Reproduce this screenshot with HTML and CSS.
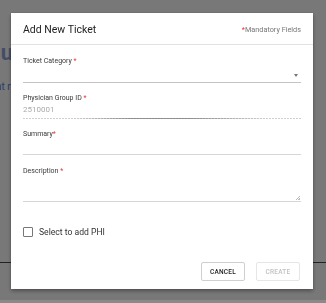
FILE: index.html
```html
<!DOCTYPE html>
<html>
<head>
<meta charset="utf-8">
<link rel="stylesheet" href="styles.css">
</head>
<body>
<div class="page">
  <div class="page-title">Lu</div>
  <div class="page-link">Chat now</div>
  <div class="page-rule"></div>
</div>
<div class="overlay">
  <div class="dialog">
    <div class="dialog-header">
      <div class="dialog-title">Add New Ticket</div>
      <div class="mandatory"><span class="req">*</span>Mandatory Fields</div>
    </div>
    <div class="dialog-body">
      <div class="field f1">
        <div class="label">Ticket Category <span class="req">*</span></div>
        <div class="input select"><span class="arrow"></span></div>
      </div>
      <div class="field f2">
        <div class="label">Physician Group ID <span class="req">*</span></div>
        <div class="input disabled"><span class="value">2510001</span></div>
      </div>
      <div class="field f3">
        <div class="label">Summary<span class="req">*</span></div>
        <div class="input"></div>
      </div>
      <div class="field f4">
        <div class="label">Description <span class="req">*</span></div>
        <div class="input textarea"><span class="grip"></span></div>
      </div>
      <div class="check-row">
        <span class="checkbox"></span>
        <span class="check-label">Select to add PHI</span>
      </div>
    </div>
    <div class="dialog-footer">
      <button class="btn cancel">Cancel</button>
      <button class="btn create">Create</button>
    </div>
  </div>
</div>
</body>
</html>
```
FILE: styles.css
```css
html, body {
  margin: 0;
  padding: 0;
}
body {
  width: 326px;
  height: 303px;
  overflow: hidden;
  background: #8a8a8a;
  font-family: Roboto, "Liberation Sans", sans-serif;
}
.page {
  height: 300px;
  padding-top: 40px;
  box-sizing: border-box;
  background: #fff;
}
.page-title {
  font-size: 22px;
  font-weight: 700;
  color: #8ea6d8;
  margin-left: -13px;
  line-height: 26px;
  letter-spacing: 2px;
}
.page-link {
  margin-top: 15px;
  margin-left: -16px;
  font-size: 10px;
  color: #5b82d6;
  line-height: 12px;
}
.page-rule {
  margin-top: 169px;
  height: 1px;
  background: #4a4a4a;
}
.overlay {
  position: fixed;
  left: 0;
  top: 0;
  width: 326px;
  height: 300px;
  background: rgba(0, 0, 0, 0.53);
  padding: 13px 0 0 11px;
  box-sizing: border-box;
}
.dialog {
  width: 302px;
  height: 276px;
  background: #fff;
  box-shadow: 0 2px 4px rgba(0, 0, 0, 0.35), 0 0 1px rgba(0, 0, 0, 0.2);
  display: flex;
  flex-direction: column;
}
.dialog-header {
  height: 31px;
  border-bottom: 1px solid #e2e2e2;
  display: flex;
  align-items: center;
  justify-content: space-between;
  padding: 0 12px 0 12px;
}
.dialog-title {
  font-size: 10.5px;
  color: #222;
  padding-top: 1px;
}
.mandatory {
  font-size: 7.3px;
  color: #777;
  padding-top: 1px;
}
.req {
  color: #e53935;
}
.dialog-body {
  padding: 11px 12px 0 12px;
}
.label {
  height: 10px;
  line-height: 10px;
  font-size: 7px;
  color: #3a3a3a;
}
.input {
  height: 15px;
  border-bottom: 1px solid #d6d6d6;
  position: relative;
}
.f1 .input {
  height: 16px;
  border-bottom-color: #c4c4c4;
}
.f2, .f3 {
  margin-top: 10px;
}
.f4 {
  margin-top: 11px;
}
.f4 .input {
  height: 25px;
}
.input.disabled {
  border-bottom: none;
  height: 16px;
  background-image: linear-gradient(to right, rgba(120,120,120,0.35) 60%, transparent 0);
  background-size: 3px 1px;
  background-repeat: repeat-x;
  background-position: left bottom;
}
.input.disabled::after {
  content: "";
  position: absolute;
  left: 18%;
  right: 12%;
  bottom: 0;
  height: 1px;
  background: linear-gradient(to right, rgba(110,110,110,0), rgba(110,110,110,0.7) 30%, rgba(110,110,110,0.7) 60%, rgba(110,110,110,0));
}
.value {
  display: block;
  font-size: 8px;
  color: #aaa;
  line-height: 14px;
}
.arrow {
  position: absolute;
  right: 3px;
  top: 8px;
  width: 0;
  height: 0;
  border-left: 2.5px solid transparent;
  border-right: 2.5px solid transparent;
  border-top: 3px solid #777;
}
.grip {
  position: absolute;
  right: 1px;
  bottom: 1px;
  width: 4px;
  height: 4px;
  background: linear-gradient(135deg, transparent 50%, #bbb 50%, #bbb 62%, transparent 62%, transparent 75%, #bbb 75%);
}
.check-row {
  margin-top: 24px;
  height: 12px;
  display: flex;
  align-items: center;
  gap: 6px;
}
.checkbox {
  width: 8px;
  height: 8px;
  border: 1.3px solid #777;
  border-radius: 1px;
}
.check-label {
  font-size: 8.6px;
  color: #333;
}
.dialog-footer {
  margin-top: auto;
  padding: 0 13px 8px 12px;
  display: flex;
  justify-content: flex-end;
  gap: 11px;
}
.btn {
  width: 44px;
  height: 19px;
  padding: 0;
  background: #fff;
  border: 1px solid #d8d8d8;
  border-radius: 2px;
  font-family: Roboto, "Liberation Sans", sans-serif;
  font-size: 6.5px;
  font-weight: 500;
  text-transform: uppercase;
  letter-spacing: 0.2px;
}
.cancel {
  color: #222;
  border-color: #cfcfcf;
}
.create {
  color: #c2c2c2;
  border-color: #e6e6e6;
}
```
